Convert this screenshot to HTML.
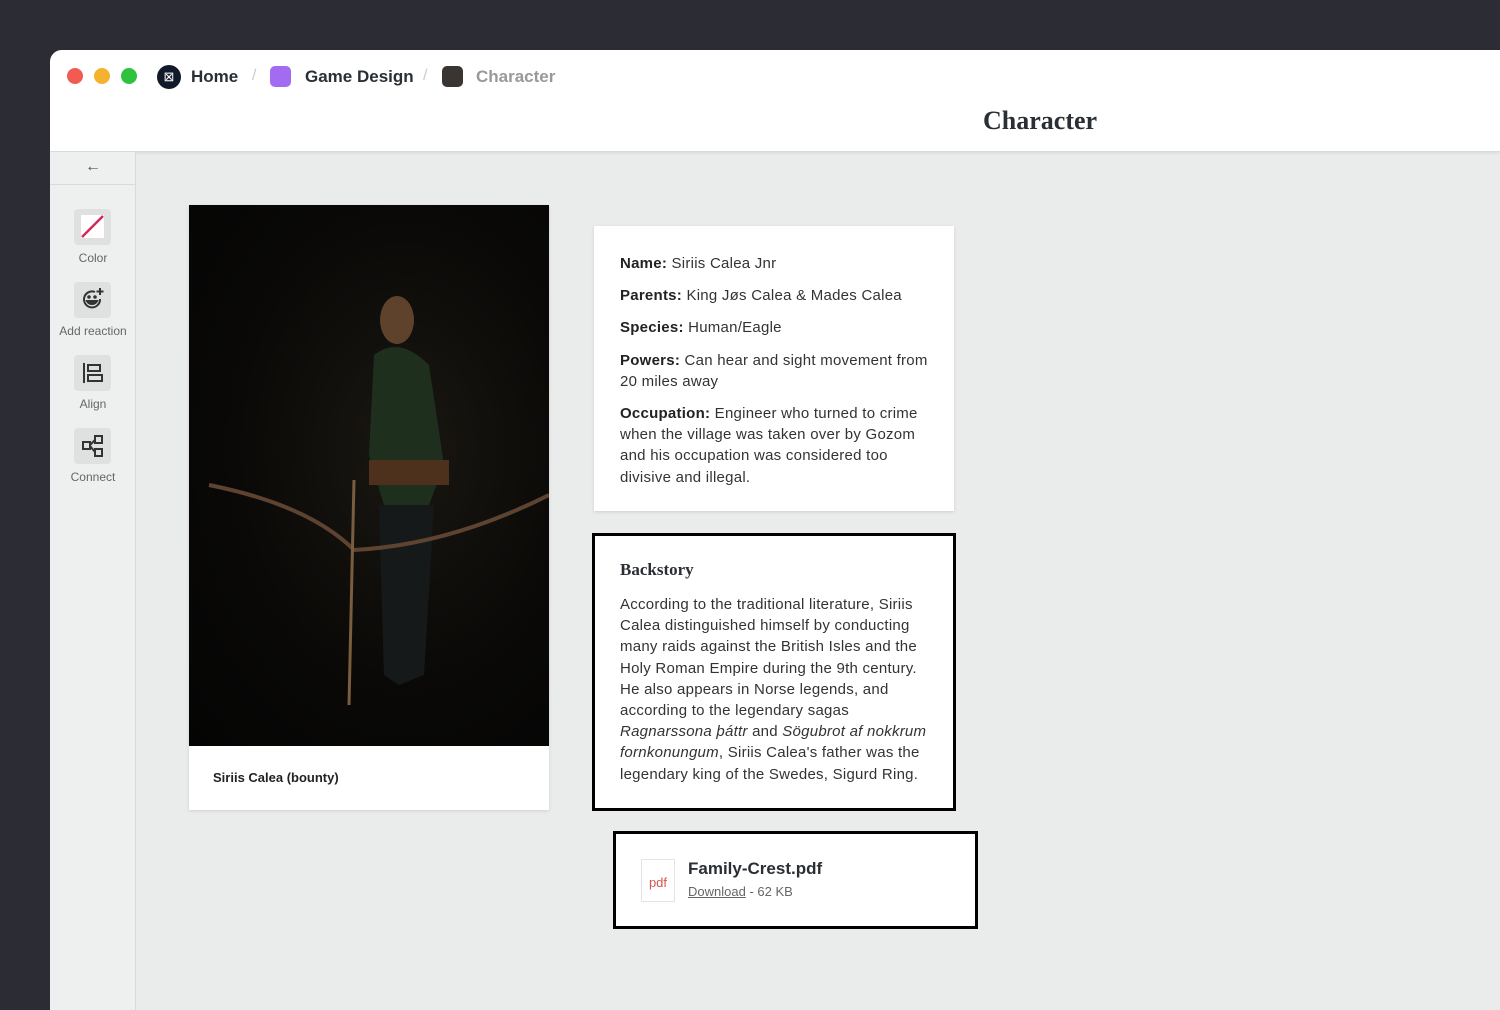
<!DOCTYPE html>
<html><head><style>
*{box-sizing:border-box;margin:0;padding:0}
body{width:1500px;height:1000px;background:#2c2c34;position:relative;overflow:hidden;font-family:"Liberation Sans",sans-serif;color:#222}
.win{position:absolute;left:50px;top:50px;width:1460px;height:960px;background:#e9ecea;border-top-left-radius:12px;overflow:hidden}
.hdr{position:absolute;left:0;top:0;right:0;height:102px;background:#fff;border-bottom:1px solid #d8dbda;box-shadow:0 1px 3px rgba(0,0,0,.08)}
.dot{position:absolute;top:18px;width:16px;height:16px;border-radius:50%}
.crumb{position:absolute;top:17px;font-size:17px;font-weight:bold;color:#2a2e35}
.sq{position:absolute;top:16px;width:21px;height:21px;border-radius:5px}
.sl{position:absolute;top:17px;color:#ccc;font-size:16px}
.title{position:absolute;left:933px;top:56px;font-family:"Liberation Serif",serif;font-weight:bold;font-size:26px;color:#2a2e35}
.side{position:absolute;left:0;top:102px;width:86px;bottom:0;background:#eef0f0;border-right:1px solid #d8dbda}
.tool{position:absolute;left:24px;width:37px;height:36px;background:#dfe1e1;border-radius:4px}
.tl{position:absolute;left:0;width:86px;text-align:center;font-size:12px;color:#666}
.card{position:absolute;background:#fff;box-shadow:0 1px 3px rgba(0,0,0,.12)}
.info p{font-size:15px;line-height:21.2px;color:#333;margin-bottom:11px;letter-spacing:.25px}
.info b{color:#222}
</style></head><body>
<div class="win">
<div class="hdr">
<div class="dot" style="left:17px;background:#f25b52"></div>
<div class="dot" style="left:44px;background:#f5b22e"></div>
<div class="dot" style="left:71px;background:#2ec23f"></div>
<div style="position:absolute;left:107px;top:15px;width:24px;height:24px;border-radius:50%;background:#111a29;color:#fff;font-size:13px;text-align:center;line-height:24px">⊠</div>
<div class="crumb" style="left:141px">Home</div>
<div class="sl" style="left:202px">/</div>
<div class="sq" style="left:220px;background:#a36af2"></div>
<div class="crumb" style="left:255px">Game Design</div>
<div class="sl" style="left:373px">/</div>
<div class="sq" style="left:392px;background:#3a3531"></div>
<div class="crumb" style="left:426px;color:#999">Character</div>
<div class="title">Character</div>
</div>
<div class="side">
<div style="position:absolute;left:0;top:0;width:86px;height:33px;border-bottom:1px solid #d8dbda;text-align:center;line-height:30px;color:#555;font-size:16px">←</div>
<div class="tool" style="top:57px"><svg width="37" height="36"><rect x="7" y="6" width="23" height="23" fill="#fff"/><line x1="8" y1="28" x2="29" y2="7" stroke="#d12a5b" stroke-width="2.5"/></svg></div>
<div class="tl" style="top:99px">Color</div>
<div class="tool" style="top:130px"><svg width="37" height="36" fill="none" stroke="#333" stroke-width="2"><path d="M26 17a8 8 0 1 1-5-7"/><path d="M13 19c2 4 8 4 10 0z" fill="#333"/><circle cx="15" cy="15" r=".8" fill="#333"/><circle cx="21" cy="15" r=".8" fill="#333"/><path d="M26 6v7M22.5 9.5h7"/></svg></div>
<div class="tl" style="top:172px">Add reaction</div>
<div class="tool" style="top:203px"><svg width="37" height="36" fill="none" stroke="#333" stroke-width="2"><path d="M10 8v20"/><rect x="14" y="10" width="12" height="6"/><rect x="14" y="20" width="14" height="6"/></svg></div>
<div class="tl" style="top:245px">Align</div>
<div class="tool" style="top:276px"><svg width="37" height="36" fill="none" stroke="#333" stroke-width="2"><rect x="9" y="14" width="7" height="7"/><rect x="21" y="8" width="7" height="7"/><rect x="21" y="21" width="7" height="7"/><path d="M16 17l5-5M16 18l5 6"/></svg></div>
<div class="tl" style="top:318px">Connect</div>
</div>

<div class="card" style="left:139px;top:155px;width:360px;height:605px">
<div style="position:absolute;left:0;top:0;width:360px;height:541px;background:radial-gradient(ellipse at 60% 45%,#1a1712 0%,#0a0907 55%,#040404 100%)">
<svg width="360" height="541">
<ellipse cx="208" cy="115" rx="17" ry="24" fill="#5e422c"/>
<path d="M185 150 Q210 130 240 160 L255 260 L240 300 L195 300 L180 250Z" fill="#1f2f1d"/>
<rect x="180" y="255" width="80" height="25" fill="#4e311c"/>
<path d="M190 300 L245 300 L235 470 L210 480 L195 470Z" fill="#161919"/>
<path d="M20 280 Q120 300 165 345 Q260 340 360 290" fill="none" stroke="#5e4430" stroke-width="4"/>
<line x1="165" y1="275" x2="160" y2="500" stroke="#7a5c3e" stroke-width="3"/>
</svg>
</div>
<div style="position:absolute;left:24px;top:565px;font-size:13px;font-weight:bold;color:#222">Siriis Calea (bounty)</div>
</div>

<div class="card info" style="left:544px;top:176px;width:360px;height:285px;padding:27px 26px">
<p><b>Name:</b> Siriis Calea Jnr</p>
<p><b>Parents:</b> King Jøs Calea &amp; Mades Calea</p>
<p><b>Species:</b> Human/Eagle</p>
<p><b>Powers:</b> Can hear and sight movement from 20 miles away</p>
<p><b>Occupation:</b> Engineer who turned to crime when the village was taken over by Gozom and his occupation was considered too divisive and illegal.</p>
</div>

<div style="position:absolute;left:542px;top:483px;width:364px;height:278px;background:#fff;border:3px solid #000;padding:24px 25px">
<div style="font-family:'Liberation Serif',serif;font-weight:bold;font-size:17px;color:#2a2e35;margin-bottom:14px">Backstory</div>
<div style="font-size:15px;line-height:21.2px;color:#333;letter-spacing:.25px">According to the traditional literature, Siriis Calea distinguished himself by conducting many raids against the British Isles and the Holy Roman Empire during the 9th century. He also appears in Norse legends, and according to the legendary sagas <i>Ragnarssona þáttr</i> and <i>Sögubrot af nokkrum fornkonungum</i>, Siriis Calea's father was the legendary king of the Swedes, Sigurd Ring.</div>
</div>

<div style="position:absolute;left:563px;top:781px;width:365px;height:98px;background:#fff;border:3px solid #000">
<div style="position:absolute;left:25px;top:25px;width:34px;height:43px;border:1px solid #e4e4e4;color:#d9534f;font-size:13px;text-align:center;line-height:45px">pdf</div>
<div style="position:absolute;left:72px;top:25px;font-size:17px;font-weight:bold;color:#2a2e35">Family-Crest.pdf</div>
<div style="position:absolute;left:72px;top:50px;font-size:13px;color:#666"><span style="text-decoration:underline">Download</span> - 62 KB</div>
</div>
</div>
</body></html>
